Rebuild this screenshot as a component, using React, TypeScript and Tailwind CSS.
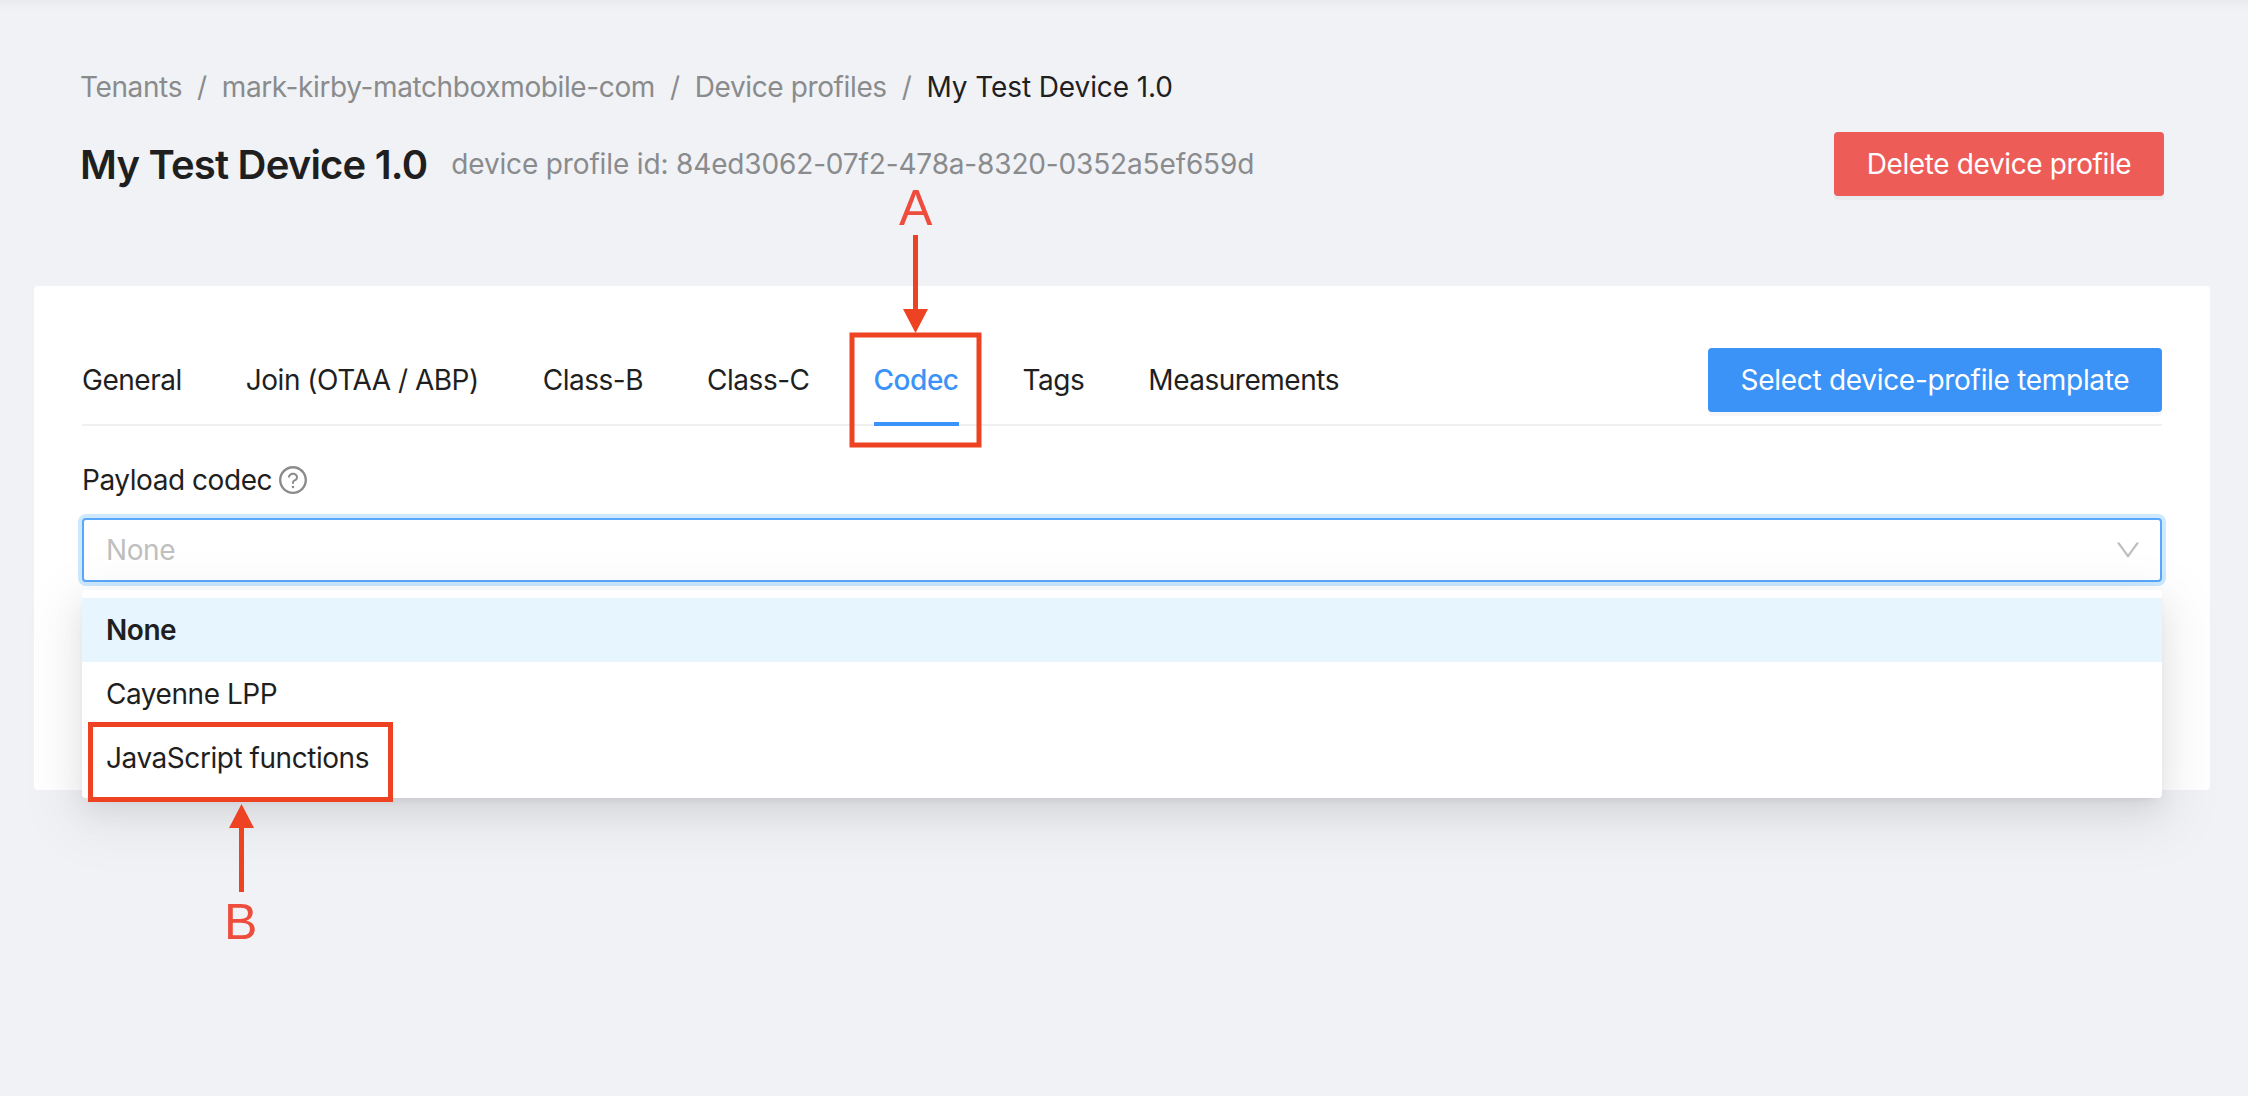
import { AiOutlineDown, AiOutlineQuestionCircle } from 'react-icons/ai';

const tabs = ['General', 'Join (OTAA / ABP)', 'Class-B', 'Class-C', 'Codec', 'Tags', 'Measurements'];

function Breadcrumb() {
  const parts = ['Tenants', 'mark-kirby-matchboxmobile-com', 'Device profiles'];
  return (
    <nav className="flex items-center text-[28px] leading-[44px] text-[#8a8b8d]">
      {parts.map((part) => (
        <span key={part} className="flex items-center">
          <span>{part}</span>
          <span className="mx-[15px]">/</span>
        </span>
      ))}
      <span className="tracking-[-0.1px] text-[#1f1f1f]">My Test Device 1.0</span>
    </nav>
  );
}

function Tabs() {
  return (
    <div className="flex items-start justify-between h-[78px] border-b-2 border-[#f0f0f0]">
      <div className="flex items-end gap-16 h-[78px] tracking-[-0.48px]">
        {tabs.map((tab) => (
          <div
            key={tab}
            className={
              tab === 'Codec'
                ? 'pb-5 leading-[44px] border-b-4 border-[#3c93f7] text-[#3c93f7] font-medium'
                : 'pb-5 leading-[44px] border-b-4 border-transparent text-[#1f1f1f]'
            }
          >
            {tab}
          </div>
        ))}
      </div>
      <button className="h-16 w-[454px] rounded bg-[#3c93f7] tracking-[-0.3px] text-white shadow-[0_4px_0_rgba(0,0,0,0.03)]">
        Select device-profile template
      </button>
    </div>
  );
}

function CodecSelect() {
  const options = ['None', 'Cayenne LPP', 'JavaScript functions'];
  return (
    <div className="relative">
      <div className="flex items-center justify-between h-16 pl-[22px] pr-[17px] rounded border-2 border-[#5aa8fb] bg-white shadow-[0_0_0_4px_rgba(5,145,255,0.2)]">
        <span className="text-[#bfbfbf]">None</span>
        <AiOutlineDown className="w-[30px] h-[30px] text-[#bfbfbf]" />
      </div>
      <div className="absolute left-0 right-0 top-[72px] z-10 py-2 rounded bg-white tracking-[-0.45px] shadow-[0_12px_32px_0_rgba(0,0,0,0.08),0_6px_12px_-8px_rgba(0,0,0,0.12),0_18px_56px_16px_rgba(0,0,0,0.05)]">
        {options.map((option, i) => (
          <div
            key={option}
            className={
              i === 0
                ? 'flex items-center h-16 px-6 bg-[#e7f5fe] font-semibold text-[#1f1f1f]'
                : 'flex items-center h-16 px-6 text-[#1f1f1f]'
            }
          >
            {option}
          </div>
        ))}
      </div>
    </div>
  );
}

function Callouts() {
  return (
    <div className="absolute inset-0 z-20 pointer-events-none">
      <svg width="2248" height="1096" className="block">
        <g fill="none" stroke="#ee4323" strokeWidth="5">
          <rect x="852" y="335" width="127" height="110" />
          <rect x="90.5" y="724.5" width="300" height="75" />
        </g>
        <g fill="#ee4323">
          <rect x="913" y="235" width="5" height="74" />
          <polygon points="915.5,333 903,309 928,309" />
          <rect x="239" y="828" width="5" height="64" />
          <polygon points="241.5,804 229,828 254,828" />
        </g>
      </svg>
      <span className="absolute left-[899px] top-[180px] text-[50px] leading-[56px] tracking-normal text-[#ee4c3c] font-['Liberation_Sans',sans-serif]">
        A
      </span>
      <span className="absolute left-[224px] top-[894px] text-[50px] leading-[56px] tracking-normal text-[#ee4c3c] font-['Liberation_Sans',sans-serif]">
        B
      </span>
    </div>
  );
}

export default function App() {
  return (
    <div className="relative min-h-[1096px] overflow-hidden bg-[#f0f2f6] pt-[65px] text-[28px] tracking-[-0.38px] font-['Inter',sans-serif] shadow-[inset_0_14px_12px_-12px_rgba(0,0,0,0.05)]">
      <div className="pl-20 pr-[84px]">
        <Breadcrumb />
        <div className="flex items-center justify-between mt-[23px]">
          <div className="flex items-center gap-6">
            <h1 className="pt-[2px] text-[40px] leading-[62px] tracking-[-0.8px] font-semibold text-[#1f1f1f]">My Test Device 1.0</h1>
            <span className="tracking-[-0.15px] text-[#8a8b8d]">device profile id: 84ed3062-07f2-478a-8320-0352a5ef659d</span>
          </div>
          <button className="h-16 w-[330px] rounded bg-[#ee5c58] text-white shadow-[0_4px_0_rgba(0,0,0,0.03)]">
            Delete device profile
          </button>
        </div>
      </div>

      <div className="ml-[34px] mr-[38px] mt-[90px] h-[504px] rounded-sm bg-white px-12 pt-[62px]">
        <Tabs />
        <div className="flex items-center gap-[5px] mt-8 mb-4 leading-[44px] tracking-[-0.45px] text-[#1f1f1f]">
          <span>Payload codec</span>
          <AiOutlineQuestionCircle className="w-8 h-8 text-[#8a8b8d]" />
        </div>
        <CodecSelect />
      </div>

      <Callouts />
    </div>
  );
}
